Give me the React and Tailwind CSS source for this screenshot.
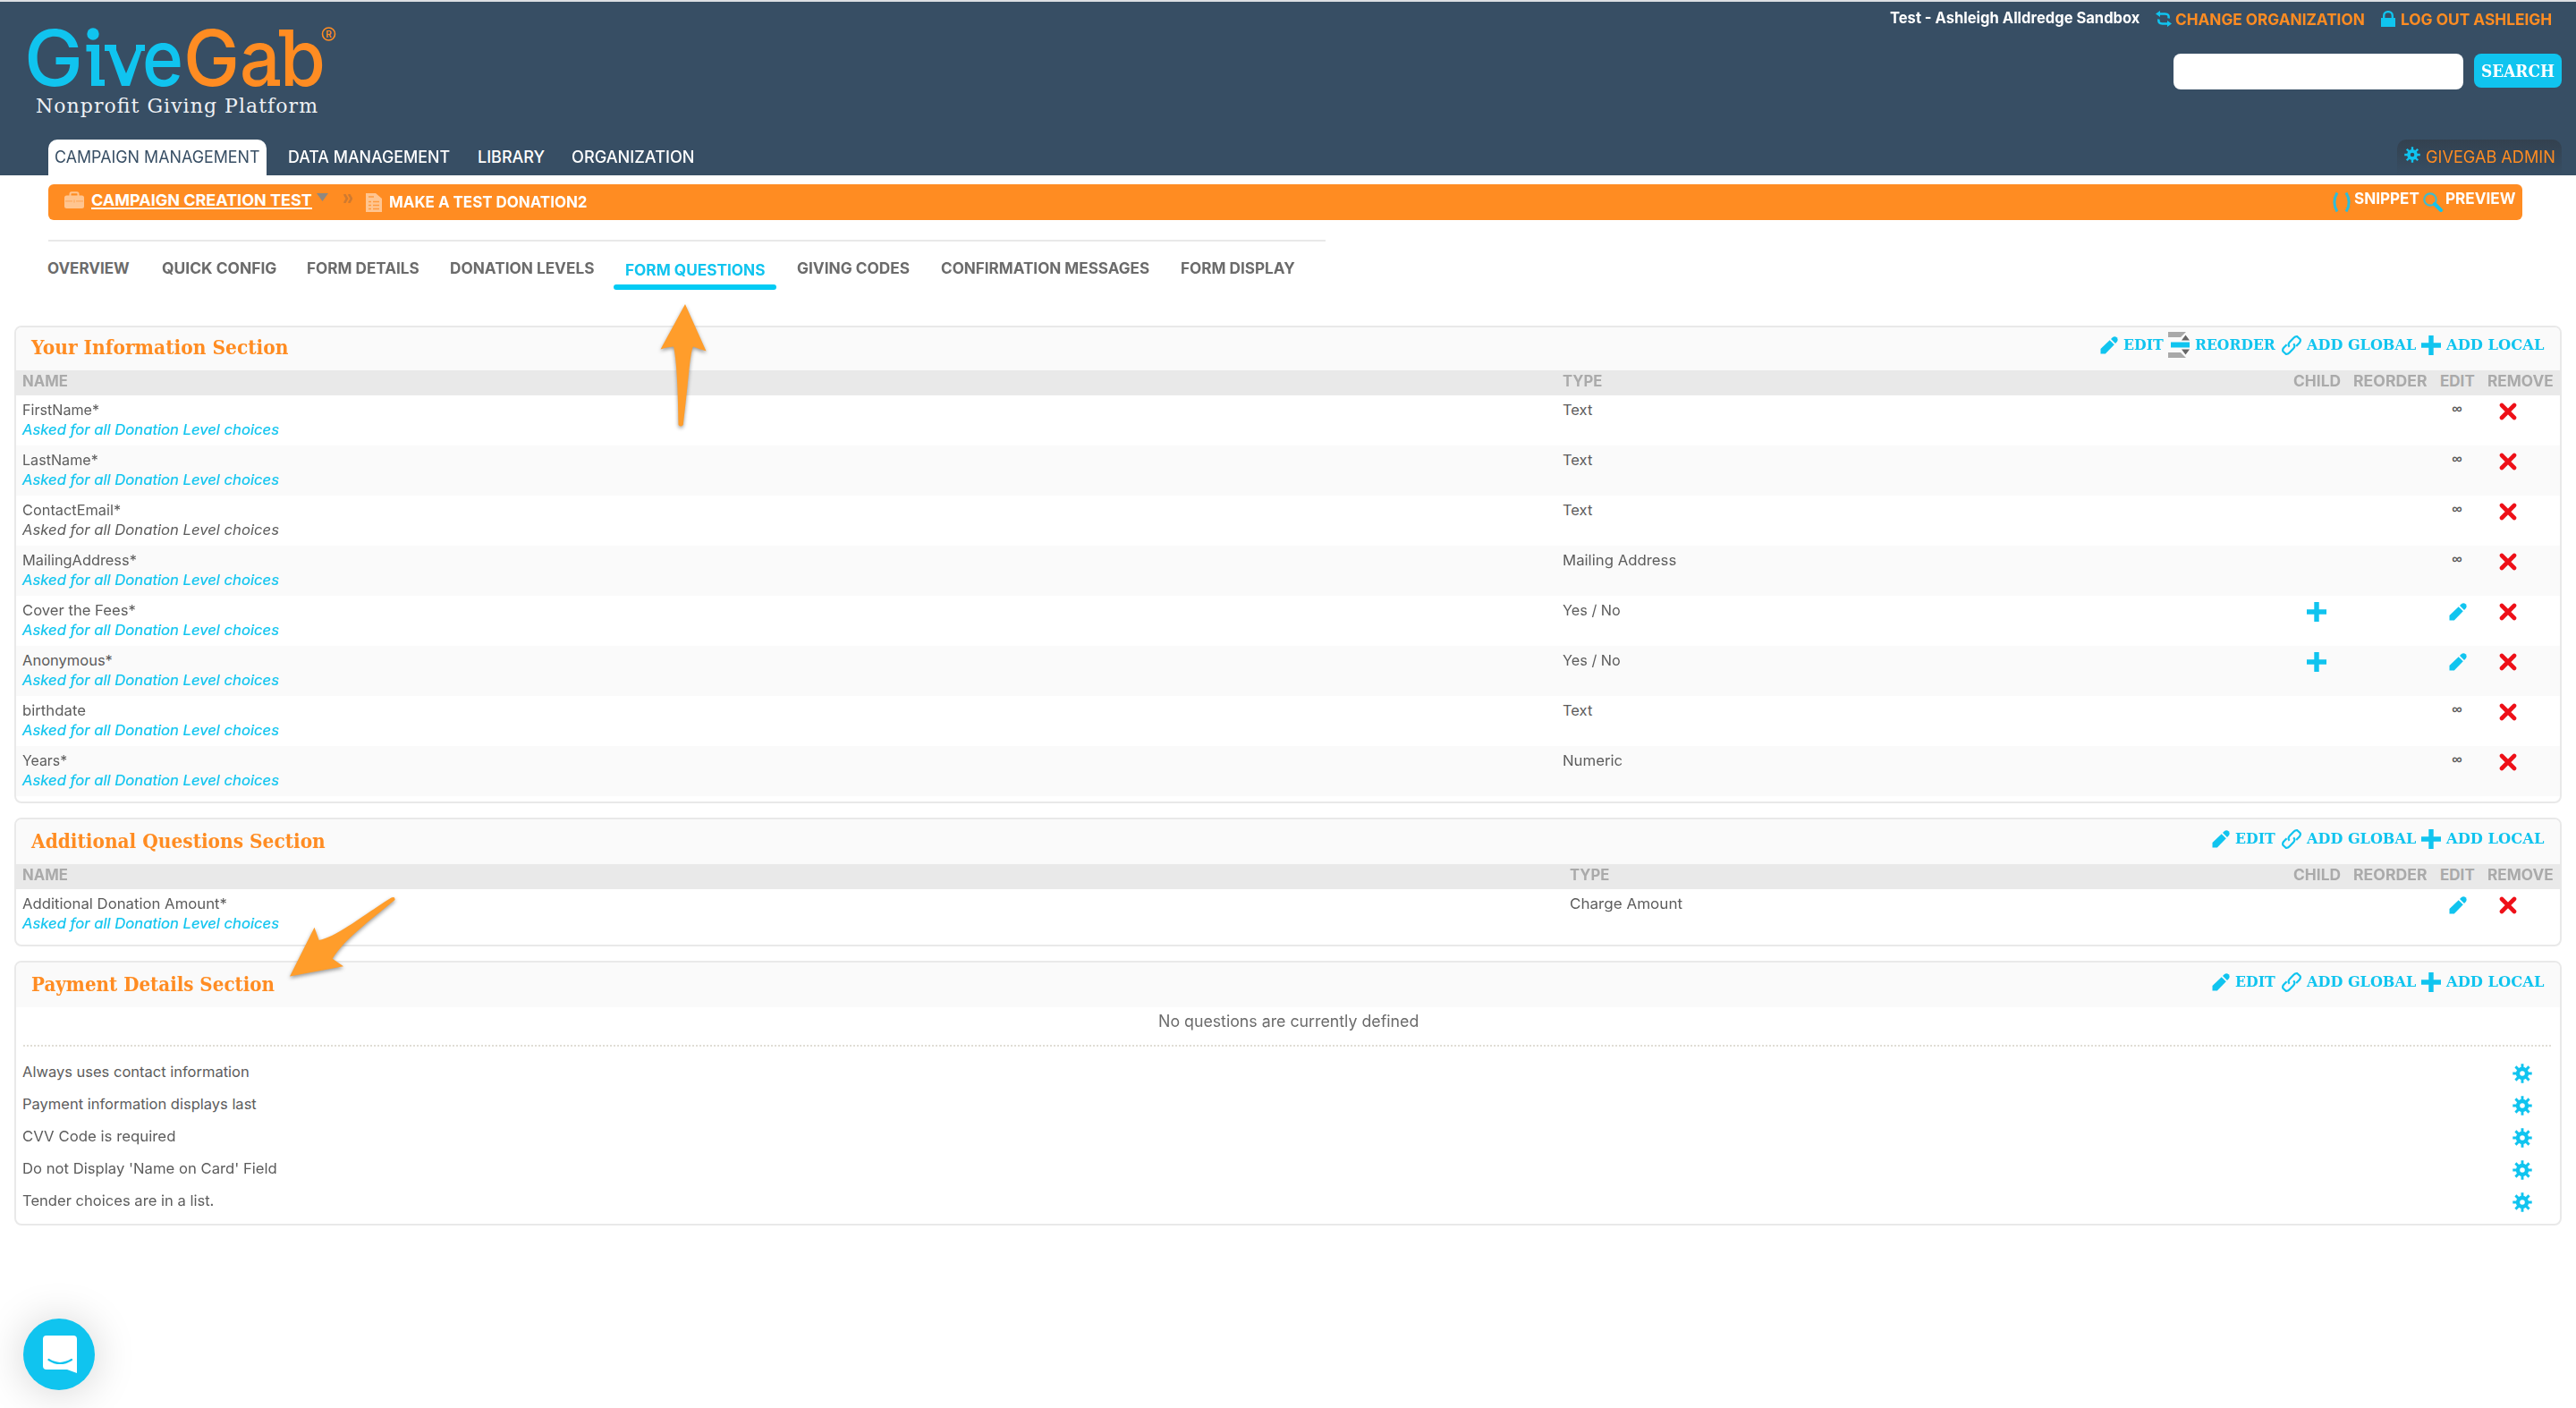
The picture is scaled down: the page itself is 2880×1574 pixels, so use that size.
import { useLayoutEffect, useRef, useState } from 'react';

const SANS = "font-['Inter',sans-serif]";
const SLAB = "font-['DejaVu_Serif',serif]";

// Stretches a label so that it fills exactly the width it is given
function Label({ w, className = '', children }) {
    const ref = useRef(null);
    const [scale, setScale] = useState(1);

    useLayoutEffect(() => {
        setScale(w / ref.current.offsetWidth);
    }, [w, children]);

    return (
        <span className={`block shrink-0 whitespace-nowrap ${className}`} style={{ width: w }}>
            <span ref={ref} className="inline-block origin-left" style={{ transform: `scaleX(${scale})` }}>
                {children}
            </span>
        </span>
    );
}

/* Icons */

function PencilIcon() {
    return (
        <svg className="block w-5 h-5 shrink-0" viewBox="0 0 20 20" fill="#10c4ef">
            <path d="M0.5 19.5V14L10.7 4.2L15.8 9.2L5.8 19.5Z" />
            <path d="M12 3L14 1C15.5-0.2 17.3 0 18.6 1.2C19.9 2.6 20 4.4 18.9 5.9L17 8Z" />
        </svg>
    );
}

function PlusIcon() {
    return (
        <svg className="block w-[22px] h-[22px] shrink-0" viewBox="0 0 22 22" fill="#10c4ef">
            <path d="M8.3 0H13.7V8.3H22V13.7H13.7V22H8.3V13.7H0V8.3H8.3Z" />
        </svg>
    );
}

function CrossIcon() {
    return (
        <svg className="block w-5 h-5" viewBox="0 0 20 20" stroke="#ee1018" strokeWidth="4.6" strokeLinecap="round">
            <path d="M3 3L17 17M17 3L3 17" />
        </svg>
    );
}

function LinkIcon() {
    return (
        <svg className="block w-[22px] h-[22px] shrink-0" viewBox="0 0 22 22" fill="none" stroke="#10c4ef" strokeWidth="2.2" strokeLinejoin="round">
            <path d="M8.6 12.8C6.8 10.6 7.6 8.9 8.8 7.6L13.6 2.6C14.6 1.5 16 1 17.4 1.2L20.6 4.2C21.2 5.6 20.8 7 19.8 8.2L16.2 12" />
            <path d="M13.2 9.2C15 11.2 14.6 12.9 13.2 14.4L8.6 19.2C7.4 20.4 6 21 4.6 20.8L1.4 17.8C0.8 16.4 1.2 15 2.2 13.8L5.6 10.2" />
        </svg>
    );
}

function ReorderIcon() {
    return (
        <svg className="block w-6 h-[30px] shrink-0" viewBox="0 0 24 30">
            <path d="M0 0H20L14 6H0ZM0 23H14L20 29H0Z" fill="#a9a9a9" />
            <path d="M19.5 3.5L24 9.5H15ZM15 19.5H24L19.5 25.5Z" fill="#666" />
            <path d="M3 11.5H24V17.5H3Z" fill="#10c4ef" />
        </svg>
    );
}

function GearIcon({ className = 'w-[22px] h-[22px]' }) {
    return (
        <svg className={`block shrink-0 ${className}`} viewBox="0 0 22 22" fill="none" stroke="#10c4ef">
            <circle cx="11" cy="11" r="5" strokeWidth="4.4" />
            <path d="M11 0.3V5M11 17V21.7M0.3 11H5M17 11H21.7M3.4 3.4L6.6 6.6M15.4 15.4L18.6 18.6M18.6 3.4L15.4 6.6M6.6 15.4L3.4 18.6" strokeWidth="2.9" />
        </svg>
    );
}

function Logo() {
    return (
        <svg className="block w-[390px] h-[130px]" viewBox="0 0 390 130">
            <g fontFamily="Inter, sans-serif" fontSize="87" fontWeight="500">
                <g fill="#10c4ef">
                    <text x="27" y="94" textLength="66" lengthAdjust="spacingAndGlyphs">G</text>
                    <path d="M96.500 48H111V87H117V94H102V55.500H96.500Z" />
                    <circle cx="104" cy="36" r="6.700" />
                    <path d="M117 48H130V54L141 80L152 54V48H162V55H158L145 94H136L122 55H117Z" />
                    <text x="159" y="94" textLength="46" lengthAdjust="spacingAndGlyphs">e</text>
                </g>
                <g fill="#ff8c22">
                    <text x="205" y="94" textLength="63" lengthAdjust="spacingAndGlyphs">G</text>
                    <text x="268" y="94" textLength="45" lengthAdjust="spacingAndGlyphs">a</text>
                    <path d="M302 87H313V94H302Z" />
                    <text x="313" y="94" textLength="51" lengthAdjust="spacingAndGlyphs">b</text>
                    <path d="M312 31H322V38.500H312Z" />
                </g>
            </g>
            <circle cx="367.500" cy="36" r="7" fill="none" stroke="#ff8c22" strokeWidth="1.6" />
            <text x="364.200" y="39.700" fontFamily="Inter, sans-serif" fontSize="10" fontWeight="600" fill="#ff8c22">R</text>
            <text x="40" y="123.500" fontFamily="DejaVu Serif, serif" fontSize="22" fill="#eef1f4" textLength="315" lengthAdjust="spacing">
                Nonprofit Giving Platform
            </text>
        </svg>
    );
}

/* Page header */

function AccountLinks() {
    return (
        <div className="flex flex-col items-end pr-4">
            <div className="flex h-10 pt-[5px] pr-[11px] text-[17.5px] font-bold leading-7">
                <Label w={279} className="-mt-px text-white">Test - Ashleigh Alldredge Sandbox</Label>
                <svg className="block w-[18px] h-[18px] ml-[18px] mt-[5px]" viewBox="0 0 18 18" fill="none" stroke="#10c4ef" strokeWidth="2.600">
                    <path d="M3 3.500H10.500C14 3.500 15 5 14.600 8.500" />
                    <path d="M15 14.500H7.500C4 14.500 3 13 3.400 9.500" />
                    <path d="M5 0L0 3.500L5 7ZM13 11L18 14.500L13 18Z" fill="#10c4ef" stroke="none" />
                </svg>
                <Label w={212} className="ml-1 mt-px text-[#ff8c22]">CHANGE ORGANIZATION</Label>
                <svg className="block w-4 h-[18px] ml-[18px] mt-[5px]" viewBox="0 0 16 18">
                    <path d="M0 8H16V18H0Z" fill="#10c4ef" />
                    <path d="M3.200 9V5.500C3.200 -0.300 12.800 -0.300 12.800 5.500V9" fill="none" stroke="#10c4ef" strokeWidth="2.400" />
                </svg>
                <Label w={169} className="ml-[6px] mt-px text-[#ff8c22]">LOG OUT ASHLEIGH</Label>
            </div>
            <form className="flex gap-3 mt-[18px]">
                <input className="w-[324px] h-10 bg-white rounded-lg" />
                <button type="button" className={`flex items-center h-[38px] w-[98px] pl-[8px] text-left text-[18px] font-bold text-white bg-[#10c4ef] rounded-lg ${SLAB}`}>
                    <Label w={82}>SEARCH</Label>
                </button>
            </form>
        </div>
    );
}

function Header() {
    return (
        <header className="flex flex-col h-[196px] border-t-2 border-[#dcdfe3] bg-[#374e64]">
            <div className="flex justify-between h-[154px]">
                <Logo />
                <AccountLinks />
            </div>
            <div className="flex justify-between h-10 pl-[54px] pr-4 text-[18px] leading-[39px]">
                <nav className="flex text-white">
                    <div className="w-[244px] pl-[7px] rounded-t-[10px] bg-white text-[#374e64]">
                        <Label w={230}>CAMPAIGN MANAGEMENT</Label>
                    </div>
                    <Label w={181} className="ml-6 font-medium">DATA MANAGEMENT</Label>
                    <Label w={75} className="ml-[31px] font-medium">LIBRARY</Label>
                    <Label w={138} className="ml-[30px] font-medium">ORGANIZATION</Label>
                </nav>
                <div className="flex w-[184px] pl-2 rounded-t-[10px] bg-linear-to-b from-[#33414f] to-[#374e64]">
                    <GearIcon className="w-[18px] h-[18px] mt-2" />
                    <Label w={145} className="ml-1.5 text-[#ff8c22]">GIVEGAB ADMIN</Label>
                </div>
            </div>
        </header>
    );
}

function Breadcrumb() {
    return (
        <div className="flex justify-between h-10 mt-2.5 ml-[54px] mr-[60px] pl-[18px] pr-[7px] rounded-[6px] bg-[#ff8c22] text-[18px] font-bold text-white">
            <div className="flex">
                <svg className="block w-[22px] h-5 mt-2" viewBox="0 0 22 20">
                    <path d="M6.500 5V3C6.500 1.800 7 1.200 8 1.200H14C15 1.200 15.500 1.800 15.500 3V5" fill="none" stroke="#ffc590" strokeWidth="2" />
                    <rect y="4.500" width="22" height="14.500" rx="2.500" fill="#ffc590" />
                    <path d="M1 10.800H9M13 10.800H21M11 9.500V12.500" stroke="#ffa95c" strokeWidth="1.200" />
                </svg>
                <div className="h-[28px] ml-2">
                    <Label w={247} className="h-7 pt-1.5 leading-6 border-b-2 border-white">CAMPAIGN CREATION TEST</Label>
                </div>
                <svg className="block w-[13px] h-[9px] mt-2.5 ml-[5px]" viewBox="0 0 13 9">
                    <path d="M0 0H13L6.500 9Z" fill="#8f8880" />
                </svg>
                <svg className="block w-2.5 h-2.5 mt-[11px] ml-[17px]" viewBox="0 0 10 10" fill="none" stroke="#cf7a30" strokeWidth="2.600">
                    <path d="M1 0L4 5L1 10M6 0L9 5L6 10" />
                </svg>
                <svg className="block w-[18px] h-[21px] mt-2.5 ml-[15px]" viewBox="0 0 18 21">
                    <path d="M0 0H11L18 6V21H0Z" fill="#ffc590" />
                    <path d="M3 4H9M3 9.500H6M8 9.500H15M3 13.500H6M8 13.500H15M3 17.500H6M8 17.500H15" stroke="#ff9a3e" strokeWidth="1.500" />
                </svg>
                <Label w={222} className="ml-2 leading-10">MAKE A TEST DONATION2</Label>
            </div>
            <div className="flex leading-8">
                <svg className="block w-5 h-[22px] mt-[9px]" viewBox="0 0 20 22" fill="none" stroke="#2fbcd8" strokeWidth="3">
                    <path d="M5 0.500C0.500 8 0.500 14 5 21.500M15 0.500C19.500 8 19.500 14 15 21.500" />
                </svg>
                <Label w={73} className="ml-1">SNIPPET</Label>
                <svg className="block w-[22px] h-[22px] mt-[9px] ml-[4px]" viewBox="0 0 22 22" fill="none">
                    <circle cx="8" cy="8" r="6.700" stroke="#42bacb" strokeWidth="2.200" />
                    <path d="M13 13L20 20" stroke="#10c4ef" strokeWidth="4" strokeLinecap="round" />
                </svg>
                <Label w={79} className="ml-[3px]">PREVIEW</Label>
            </div>
        </div>
    );
}

function SubNav() {
    return (
        <nav className="flex w-[1428px] h-[96px] ml-[54px] mt-[22px] pt-4 border-t-2 border-[#e9e9e9] text-[17px] font-bold leading-7 text-[#6b6b6b]">
            <Label w={92} className="-ml-px">OVERVIEW</Label>
            <Label w={128} className="ml-9">QUICK CONFIG</Label>
            <Label w={126} className="ml-[34px]">FORM DETAILS</Label>
            <Label w={161} className="ml-[34px]">DONATION LEVELS</Label>
            <div className="w-[182px] h-[38px] ml-[22px] pt-0.5 pl-[13px] text-[#10c4ef]">
                <Label w={157}>FORM QUESTIONS</Label>
                <div className="w-[182px] h-1.5 mt-[2px] -ml-[13px] rounded-full bg-[#02cbf4]" />
            </div>
            <Label w={126} className="ml-[23px]">GIVING CODES</Label>
            <Label w={233} className="ml-[35px]">CONFIRMATION MESSAGES</Label>
            <Label w={128} className="ml-[35px]">FORM DISPLAY</Label>
        </nav>
    );
}

/* Question panels */

const infoQuestions = [
    { name: 'FirstName*', w: 86, type: 'Text', tw: 33 },
    { name: 'LastName*', w: 85, type: 'Text', tw: 33 },
    { name: 'ContactEmail*', w: 110, type: 'Text', tw: 33, locked: true },
    { name: 'MailingAddress*', w: 128, type: 'Mailing Address', tw: 127 },
    { name: 'Cover the Fees*', w: 127, type: 'Yes / No', tw: 65, editable: true, child: true },
    { name: 'Anonymous*', w: 101, type: 'Yes / No', tw: 65, editable: true, child: true },
    { name: 'birthdate', w: 71, type: 'Text', tw: 33 },
    { name: 'Years*', w: 50, type: 'Numeric', tw: 67 },
];

const additionalQuestions = [
    { name: 'Additional Donation Amount*', w: 229, type: 'Charge Amount', tw: 126, editable: true },
];

const paymentSettings = [
    { text: 'Always uses contact information', w: 254 },
    { text: 'Payment information displays last', w: 262 },
    { text: 'CVV Code is required', w: 171 },
    { text: "Do not Display 'Name on Card' Field", w: 285 },
    { text: 'Tender choices are in a list.', w: 214 },
];

function Panel({ title, titleWidth, reorder, children }) {
    return (
        <section className="mx-4 mb-4 pb-1.5 border-2 border-[#e9e9e9] rounded-lg bg-white">
            <div className={`flex justify-between pl-[17px] pr-[18px] bg-[#fafafa] rounded-t-md ${reorder ? 'h-12' : 'h-[50px] pt-0.5'} ${SLAB}`}>
                <Label w={titleWidth} className="text-[21.5px] font-bold leading-[45px] text-[#ff8c22]">{title}</Label>
                <div className="flex items-center h-[39px] text-[17.5px] font-bold text-[#10c4ef]">
                    <PencilIcon />
                    <Label w={45} className="ml-[6px]">EDIT</Label>
                    {reorder && (
                        <div className="flex items-center ml-[5px]">
                            <ReorderIcon />
                            <Label w={90} className="ml-1.5">REORDER</Label>
                        </div>
                    )}
                    <div className="ml-[7px]">
                        <LinkIcon />
                    </div>
                    <Label w={122} className="ml-1.5">ADD GLOBAL</Label>
                    <div className="ml-1.5">
                        <PlusIcon />
                    </div>
                    <Label w={109} className="ml-1.5">ADD LOCAL</Label>
                </div>
            </div>
            {children}
        </section>
    );
}

function QuestionTable({ questions, wide }) {
    const cols = wide
        ? 'grid grid-cols-[1730px_1fr_66px_98px_52px_89px] pl-[7px]'
        : 'grid grid-cols-[1722px_1fr_66px_98px_52px_89px] pl-[7px]';

    return (
        <div>
            <div className={`${cols} h-7 bg-[#e9e9e9] text-[17px] font-bold leading-6 text-[#aaa]`}>
                <Label w={51}>NAME</Label>
                <Label w={44}>TYPE</Label>
                <Label w={53} className="ml-[7px]">CHILD</Label>
                <Label w={83} className="ml-2">REORDER</Label>
                <Label w={39} className="ml-[7px]">EDIT</Label>
                <Label w={74} className="ml-2">REMOVE</Label>
            </div>
            {questions.map((q) => (
                <div key={q.name} className={`${cols} h-14 pt-[5px] text-[16.5px] leading-[22px] text-[#5c5c5c] odd:bg-[#fafafa] even:bg-white`}>
                    <div>
                        <Label w={q.w}>{q.name}</Label>
                        <Label w={287} className={q.locked ? 'italic' : 'italic text-[#10c4ef] [-webkit-text-stroke:0.2px]'}>
                            Asked for all Donation Level choices
                        </Label>
                    </div>
                    <Label w={q.tw}>{q.type}</Label>
                    <div className="flex justify-center pt-0.5">{q.child && <PlusIcon />}</div>
                    <div />
                    <div className="flex justify-center">
                        {q.editable ? (
                            <div className="pt-[3px] pl-0.5"><PencilIcon /></div>
                        ) : (
                            <span className="-mt-px font-['Liberation_Sans',sans-serif] text-[16px] font-bold">∞</span>
                        )}
                    </div>
                    <div className="pl-[21px] pt-[3px]">
                        <CrossIcon />
                    </div>
                </div>
            ))}
        </div>
    );
}

/* Pointers and chat launcher lie over the page */

function Arrows() {
    return (
        <svg className="absolute top-0 left-0 w-[820px] h-[1110px] pointer-events-none drop-shadow-[0_2px_2px_rgba(0,0,0,0.4)]" viewBox="0 0 820 1110" fill="#ff9d2b">
            <path d="M766 340L789.500 392.500Q781 390 775 387.500C771 396 770 425 763.800 475Q761 478 758.500 475C758 430 756 400 753 387.500Q745 388 738.500 390.500Z" />
            <path d="M324 1091.500L351.500 1036.700L356.700 1051C375 1048 405 1024 437.500 1003.500Q442 1002 441.500 1006C415 1028 385 1050 371.700 1071.700L384 1080.300Z" />
        </svg>
    );
}

function ChatButton() {
    return (
        <button type="button" className="absolute left-[26px] top-[1474px] flex items-center justify-center w-20 h-20 rounded-full bg-[#10c4ef] shadow-[0_2px_48px_rgba(0,0,0,0.18)]">
            <svg className="block w-10 h-[44px] ml-0.5" viewBox="0 0 40 44">
                <path d="M5 1H35Q39 1 39 5V43L28 39H5Q1 39 1 35V5Q1 1 5 1Z" fill="#fff" />
                <path d="M7.500 28Q20 36 33 28" fill="none" stroke="#10c4ef" strokeWidth="2.200" strokeLinecap="round" />
            </svg>
        </button>
    );
}

function App() {
    return (
        <div className={`relative w-[2880px] h-[1574px] overflow-hidden bg-white ${SANS}`}>
            <Header />
            <Breadcrumb />
            <SubNav />

            <Panel title="Your Information Section" titleWidth={287} reorder>
                <QuestionTable questions={infoQuestions} />
            </Panel>

            <Panel title="Additional Questions Section" titleWidth={329}>
                <QuestionTable questions={additionalQuestions} wide />
            </Panel>

            <Panel title="Payment Details Section" titleWidth={272}>
                <div className="flex justify-center h-[42px] text-[18px] leading-8 text-[#6b6b6b]">
                    <Label w={291}>No questions are currently defined</Label>
                </div>
                <div className="h-0.5 mx-2 bg-[repeating-linear-gradient(90deg,#e0ddd5_0_2px,transparent_2px_4px)]" />
                <div className="pt-[10px] h-[192px]">
                    {paymentSettings.map((s) => (
                        <div key={s.text} className="flex items-center justify-between h-9 pl-[7px] pr-[31px] text-[16.5px] text-[#5c5c5c]">
                            <Label w={s.w}>{s.text}</Label>
                            <GearIcon className="w-[22px] h-[22px] mt-1" />
                        </div>
                    ))}
                </div>
            </Panel>

            <Arrows />
            <ChatButton />
        </div>
    );
}

export default App;
